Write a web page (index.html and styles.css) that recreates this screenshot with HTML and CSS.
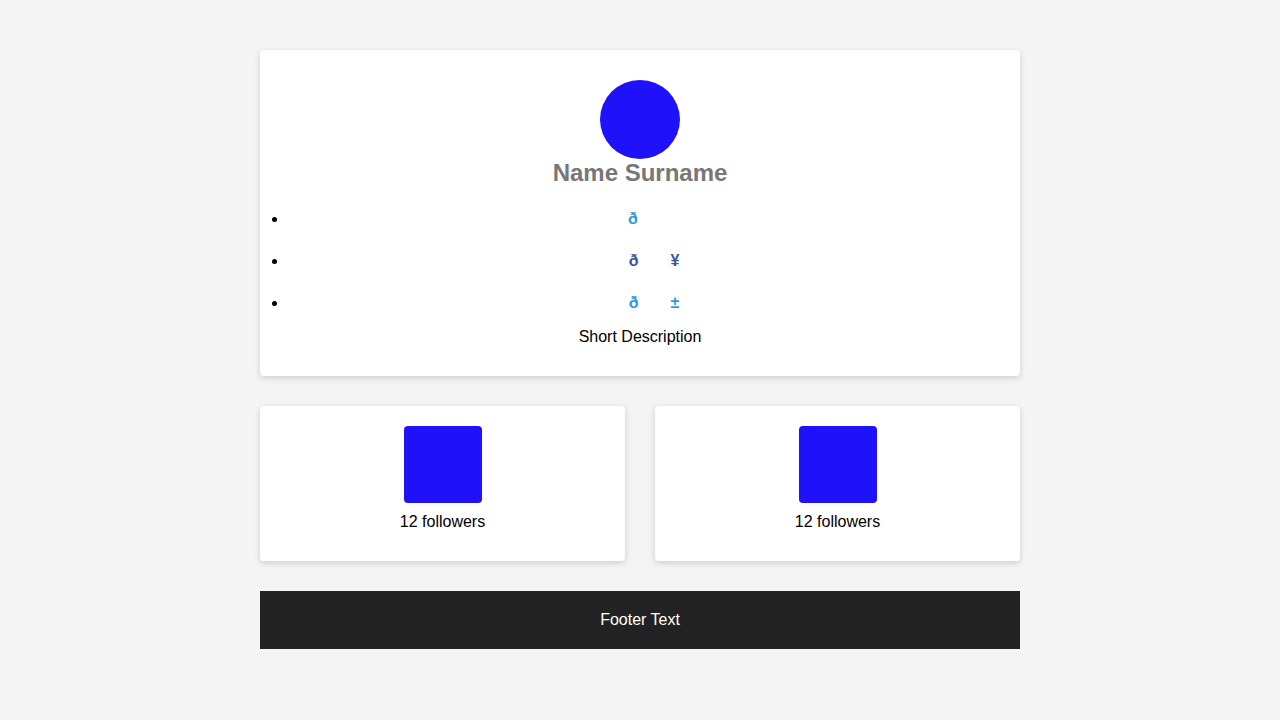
FILE: index.html
```html
<!DOCTYPE html>
<html>
<head>
<meta charset="utf-8">
<link rel="stylesheet" href="styles.css">
</head>
<body>
<div class="page">
  <section class="card profile">
    <div class="avatar"></div>
    <h2 class="name">Name Surname</h2>
    <ul class="links">
      <li><span class="g c1">ð</span><span class="gap wide"></span></li>
      <li><span class="g c2">ð</span><span class="gap"></span><span class="g c2">¥</span></li>
      <li><span class="g c1">ð</span><span class="gap"></span><span class="g c1">±</span></li>
    </ul>
    <p class="desc">Short Description</p>
  </section>
  <div class="row">
    <section class="card stat">
      <div class="thumb"></div>
      <div class="count">12 followers</div>
    </section>
    <section class="card stat">
      <div class="thumb"></div>
      <div class="count">12 followers</div>
    </section>
  </div>
  <footer class="footer">Footer Text</footer>
</div>
</body>
</html>
```
FILE: styles.css
```css
html, body {
  margin: 0;
  padding: 0;
}
body {
  background: #f4f4f4;
  font-family: "Liberation Sans", Arial, sans-serif;
  font-size: 16px;
  color: #000;
}
.page {
  width: 760px;
  margin: 50px auto 0;
  display: flex;
  flex-direction: column;
  gap: 30px;
}
.card {
  background: #fff;
  border-radius: 4px;
  box-shadow: 0 2px 6px rgba(0, 0, 0, 0.16);
}
.profile {
  padding: 30px 0 29px;
  text-align: center;
}
.avatar {
  width: 80px;
  height: 79px;
  border-radius: 50%;
  background: #1f12fb;
  margin: 0 auto;
}
.name {
  margin: 0;
  font-size: 24px;
  line-height: 28px;
  color: #777;
  font-weight: bold;
}
.links {
  margin: 22px 0 0;
  padding-left: 28px;
  list-style: disc;
}
.links li {
  height: 42px;
  line-height: 20px;
  font-weight: bold;
  font-size: 16px;
}
.g {
  font-size: 16px;
}
.gap {
  display: inline-block;
  width: 32px;
}
.gap.wide {
  width: 42px;
}
.c1 { color: #2e9ae0; }
.c2 { color: #3b55a0; }
.desc {
  margin: -8px 0 0;
  line-height: 20px;
}
.row {
  display: grid;
  grid-template-columns: 1fr 1fr;
  gap: 30px;
}
.stat {
  padding: 20px 0 29px;
  display: flex;
  flex-direction: column;
  align-items: center;
}
.thumb {
  width: 78px;
  height: 77px;
  border-radius: 4px;
  background: #1f12fb;
}
.count {
  margin-top: 9px;
  line-height: 20px;
}
.footer {
  background: #222;
  color: #fff;
  text-align: center;
  height: 58px;
  line-height: 57px;
}
```
